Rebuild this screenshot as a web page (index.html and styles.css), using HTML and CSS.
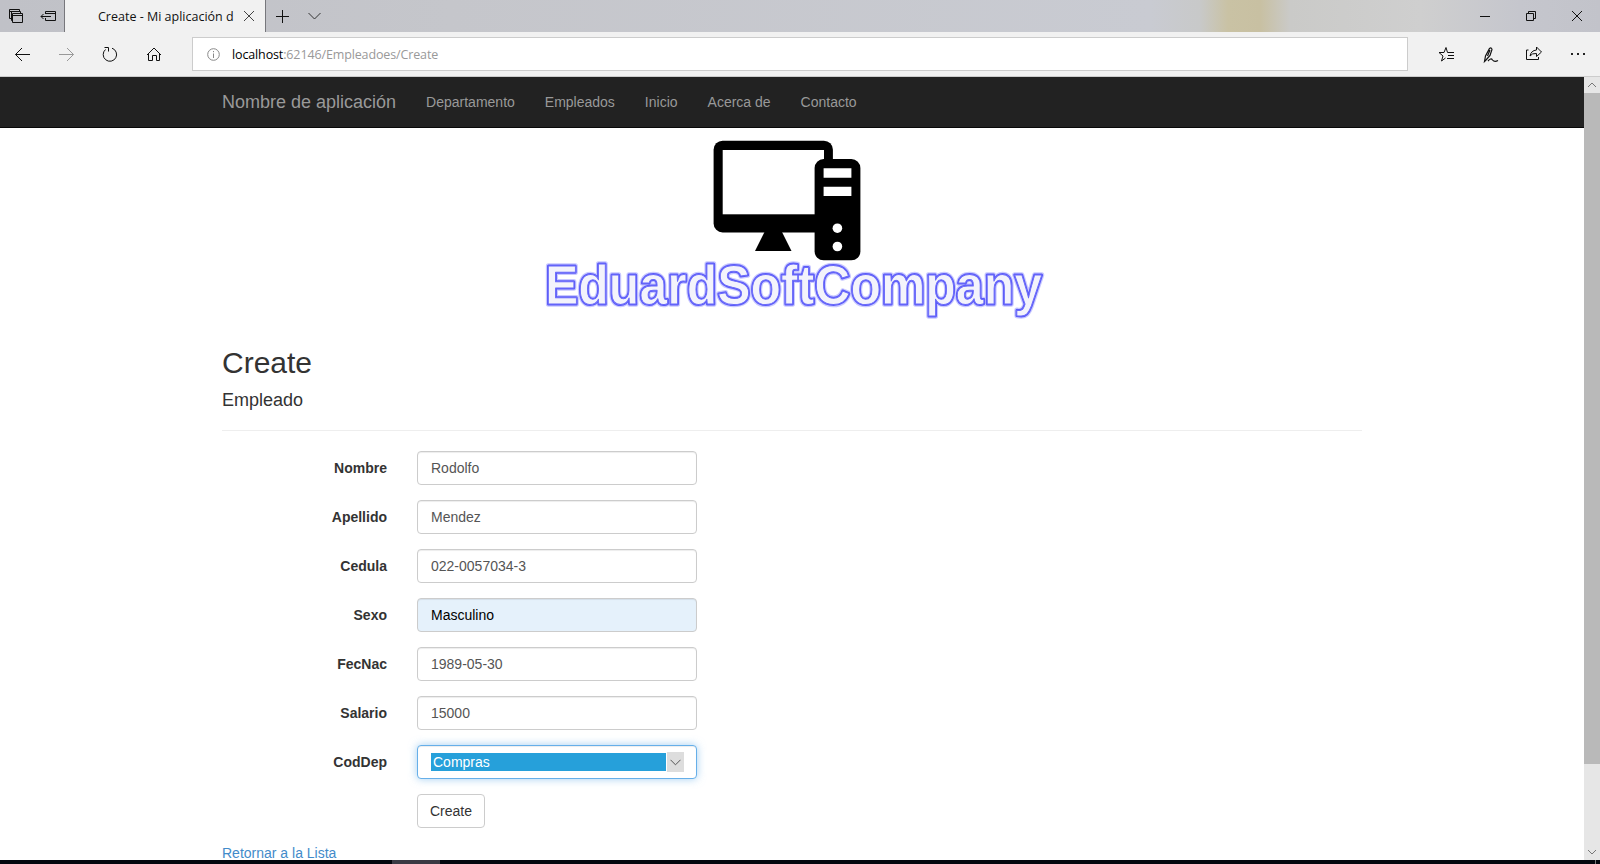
FILE: index.html
```html
<!DOCTYPE html>
<html lang="es">
<head>
<meta charset="utf-8">
<title>Create - Mi aplicación</title>
<link rel="stylesheet" href="styles.css">
</head>
<body>
<div class="window">
  <header class="titlebar">
    <div class="tab-tools">
      <svg class="icon" width="64" height="32" viewBox="0 0 64 32"><path d="M12 18.500H9.500V9.500H19.500V11M9.500 11.500H12M12.500 20.500H11.500V11.500H20.500V13M12.500 13.500H22.500V22.500H12.500ZM12.500 15.500H22.500"/><path d="M45.500 14V11.500H55.500V20.500H45.500V18M45.500 13.500H55.500M41 16.500H51M43.500 14L41 16.500L43.500 19"/></svg>
    </div>
    <div class="tab">
      <span class="tab-title">Create - Mi aplicación d</span>
      <svg class="icon tab-close" width="12" height="12" viewBox="0 0 12 12"><path d="M1 1L11 11M11 1L1 11"/></svg>
    </div>
    <svg class="icon tab-add" width="70" height="32" viewBox="0 0 70 32"><path d="M10 16.500H23M16.500 10V23"/><path class="gray" d="M42.500 13L48.500 19L54.500 13"/></svg>
    <svg class="icon controls" width="130" height="32" viewBox="0 0 130 32"><path d="M10 16.500H20M56.500 13.500H63.500V20.500H56.500ZM58.500 13V11.500H65.500V18.500H64M102 11L112 21M112 11L102 21"/></svg>
  </header>
  <div class="toolbar">
    <svg class="icon nav-icons" width="192" height="44" viewBox="0 32 192 44">
      <path d="M15.500 54.500H30M22 48L15.500 54.500L22 61"/>
      <path class="faded" d="M59 54.500H73.500M67 48L73.500 54.500L67 61"/>
      <path d="M112 48.200A6.700 6.700 0 1 1 105.500 49.500M104.500 47.500H108.500V51.500"/>
      <path d="M147 55L154 48L161 55M148.500 54V60.500H152.500V55.500H156.500V60.500H159.500V54"/>
    </svg>
    <div class="address">
      <svg class="info" width="13" height="13" viewBox="0 0 13 13"><circle cx="6.500" cy="6.500" r="5.800"/><path d="M6.500 5.500V10M6.500 3V4.200"/></svg>
      <span class="url"><b>localhost</b>:62146/Empleadoes/Create</span>
    </div>
    <svg class="icon actions" width="192" height="44" viewBox="1408 32 192 44">
      <path d="M1454 52.500H1447.500L1446 47.500L1444 52.500H1439L1443 56L1441.500 61L1445.500 58M1448 55.500H1454M1447 58.500H1454"/>
      <path class="pen" d="M1484.500 61.500L1485.500 56L1489.500 48.500Q1491.500 47 1492 49.500L1490 55.500L1486 60ZM1487.500 56L1490 50M1488 61Q1491 57.500 1492.500 60Q1494.500 62.500 1498 60.500"/>
      <path d="M1528.500 50H1526.500V59.500H1538.500V57M1530 56Q1531 50.500 1536.500 50V47L1541.500 52L1536.500 56.500V53.500Q1532 53 1530 56Z"/>
      <path class="dots" d="M1571 53H1573V55H1571ZM1577 53H1579V55H1577ZM1583 53H1585V55H1583Z"/>
    </svg>
  </div>
  <div class="viewport">
    <div class="page">
      <nav class="navbar">
        <div class="container nav-row">
          <a class="brand">Nombre de aplicación</a>
          <a>Departamento</a><a>Empleados</a><a>Inicio</a><a>Acerca de</a><a>Contacto</a>
        </div>
      </nav>
      <main class="container">
        <svg class="logo" width="1140" height="208" viewBox="222 128 1140 208" role="img" aria-label="EduardSoftCompany">
          <rect x="713.600" y="140.700" width="119.300" height="91.800" rx="9"/>
          <rect class="hole" x="722.700" y="150" width="101.300" height="64.300"/>
          <path d="M764.500 232L755 251H791.500L782 232Z"/>
          <rect x="814.600" y="159" width="45.800" height="101.300" rx="9"/>
          <path class="hole" d="M823.600 168.300H851.400V177.700H823.600ZM823.600 186.700H851.400V196H823.600Z"/>
          <circle class="hole" cx="837.400" cy="228.200" r="4.800"/>
          <circle class="hole" cx="837.400" cy="246.500" r="4.800"/>
          <g class="wordmark">
            <text class="halo" x="545" y="303.500" textLength="497" lengthAdjust="spacingAndGlyphs">EduardSoftCompany</text>
            <text class="edge" x="545" y="303.500" textLength="497" lengthAdjust="spacingAndGlyphs">EduardSoftCompany</text>
            <text class="face" x="545" y="303.500" textLength="497" lengthAdjust="spacingAndGlyphs">EduardSoftCompany</text>
          </g>
        </svg>
        <h2>Create</h2>
        <h4>Empleado</h4>
        <hr>
        <form class="form">
          <div class="group"><span class="label">Nombre</span><div class="control">Rodolfo</div></div>
          <div class="group"><span class="label">Apellido</span><div class="control">Mendez</div></div>
          <div class="group"><span class="label">Cedula</span><div class="control">022-0057034-3</div></div>
          <div class="group"><span class="label">Sexo</span><div class="control autofill">Masculino</div></div>
          <div class="group"><span class="label">FecNac</span><div class="control">1989-05-30</div></div>
          <div class="group"><span class="label">Salario</span><div class="control">15000</div></div>
          <div class="group"><span class="label">CodDep</span>
            <div class="control focus"><span class="selected">Compras</span><span class="arrow"><svg class="icon" width="11" height="7" viewBox="0 0 11 7"><path d="M.5 .8L5.500 5.800L10.500 .8"/></svg></span></div>
          </div>
          <div class="group"><span class="label"></span><button class="btn" type="button">Create</button></div>
        </form>
        <a class="back">Retornar a la Lista</a>
      </main>
    </div>
    <div class="scrollbar">
      <svg class="icon" width="16" height="16" viewBox="0 0 16 16"><path d="M4 10L8 6L12 10"/></svg>
      <div class="thumb"></div>
      <svg class="icon" width="16" height="16" viewBox="0 0 16 16"><path d="M4 6L8 10L12 6"/></svg>
    </div>
  </div>
  <footer class="taskbar"><span class="task"></span><span class="peek"></span></footer>
</div>
</body>
</html>
```
FILE: styles.css
```css
* { box-sizing: border-box; }
body { margin: 0; font: 14px/20px "Liberation Sans", Arial, sans-serif; color: #333; background: #fff; }
.window { display: flex; flex-direction: column; width: 1600px; height: 864px; overflow: hidden; }
.icon { display: block; fill: none; stroke: #111; stroke-width: 1; flex: none; }
.icon .gray { stroke: #333; }
.icon .faded { stroke: #999; }
.icon .pen { stroke-width: 1.2; }
.icon .dots { fill: #222; stroke: none; }

.titlebar { display: flex; height: 32px; flex: none; background: linear-gradient(90deg, #c0c1c7 0, #c5c6cb 450px, #c9cbd2 1150px, #c8c9c9 1200px, #c9c2a4 1228px, #c8c0a2 1260px, #cacac8 1290px, #cfcfcf 1420px, #c5c6cd 1520px, #c2c3ca 1600px); }
.tab-tools { width: 64px; }
.tab { display: flex; align-items: center; width: 202px; padding-left: 33px; background: #f1f1f1; border-left: 1px solid #77777c; border-right: 1px solid #77777c; }
.tab-title { width: 136px; padding-top: 1px; font: 12.500px/31px "Open Sans", "Noto Sans", sans-serif; color: #111; white-space: nowrap; }
.tab-close { margin-left: 9px; stroke: #444; }
.controls { width: 130px; margin-left: auto; }

.toolbar { display: flex; height: 45px; flex: none; background: #f1f1f1; border-bottom: 1px solid #ccc; }
.address { display: flex; align-items: center; flex: 1; height: 34px; margin-top: 5px; padding-left: 14px; background: #fff; border: 1px solid #ccc; }
.info { fill: none; stroke: #888; stroke-width: 1; }
.url { margin-left: 12px; padding-top: 2px; font: 12.500px/30px "Open Sans", "Noto Sans", sans-serif; letter-spacing: -.13px; color: #999; }
.url b { font-weight: 400; color: #000; }

.viewport { display: flex; height: 783px; flex: none; overflow: hidden; }
.page { width: 1584px; }
.container { width: 1170px; margin: 0 auto; padding: 0 15px; }
.navbar { height: 51px; background: #222; border-bottom: 1px solid #080808; }
.nav-row { display: flex; gap: 30px; line-height: 50px; color: #999; }
.brand { font-size: 18px; }

.logo { display: block; }
.logo .hole { fill: #fff; }
.wordmark { font: bold 55.500px "Liberation Sans", Arial, sans-serif; stroke-linejoin: round; filter: blur(.35px); }
.halo { fill: none; stroke: #c9c9ff; stroke-width: 5.500px; }
.edge { fill: none; stroke: #5c5cf8; stroke-width: 3px; }
.face { fill: #f3f3fb; stroke: #6a6afa; stroke-width: 1px; }

h2 { margin: 10px 0 11px; font-size: 30px; line-height: 33px; }
h4 { margin: 0; font-size: 18px; line-height: 20px; }
h2, h4 { font-weight: 400; }
hr { margin: 20px 0; border: 0; border-top: 1px solid #eee; }
.form { display: flex; flex-direction: column; gap: 15px; }
.group { display: flex; height: 34px; }
.label { width: 165px; margin-right: 30px; padding-top: 7px; font-weight: 700; text-align: right; }
.control { display: flex; align-items: center; width: 280px; padding: 0 13px; color: #555; background: #fff; border: 1px solid #ccc; border-radius: 4px; box-shadow: inset 0 1px 1px rgba(0,0,0,.075); }
.autofill { color: #000; background: #e5f1fb; }
.focus { padding-right: 12px; border-color: #66afe9; box-shadow: inset 0 1px 1px rgba(0,0,0,.075), 0 0 8px rgba(102,175,233,.6); }
.selected { flex: 1; height: 18px; padding-left: 2px; line-height: 18px; color: #fff; background: #26a0da; }
.arrow { display: grid; place-items: center; width: 17px; height: 20px; margin-left: 1px; background: #ddd; }
.arrow .icon { stroke: #555; }
.btn { width: 68px; padding: 0; font: inherit; color: #333; background: #fff; border: 1px solid #ccc; border-radius: 4px; }
.back { display: block; margin-top: 15px; color: #428bca; }

.scrollbar { display: flex; flex-direction: column; justify-content: space-between; width: 16px; background: #e6e6e6; }
.scrollbar .icon { stroke: #777; }
.thumb { height: 671px; margin-bottom: auto; background: #b9b9b9; }
.taskbar { display: flex; height: 4px; flex: none; background: #03060e; }
.task { width: 48px; margin-left: 392px; background: #3a3a44; }
.peek { width: 1px; margin-left: auto; margin-right: 4px; background: #777; }
```
